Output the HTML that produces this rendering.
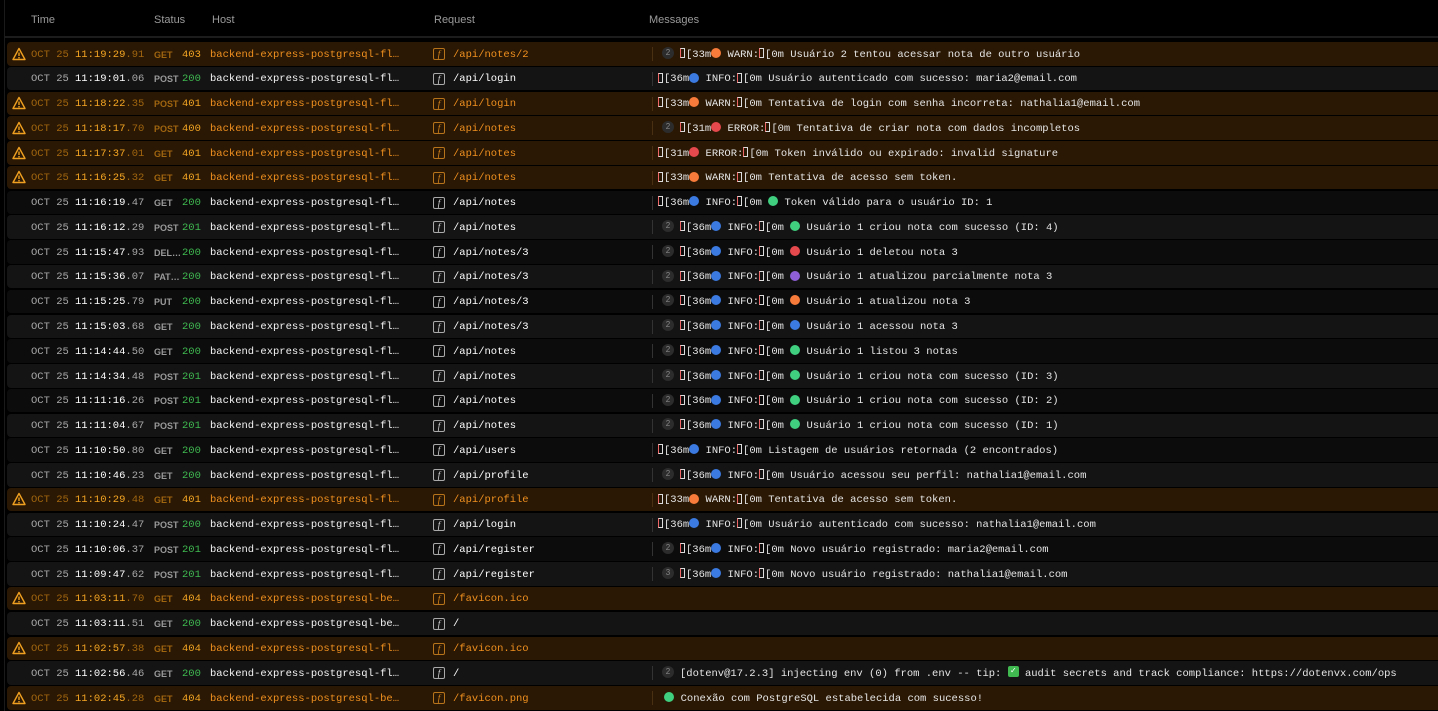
<!DOCTYPE html>
<html><head><meta charset="utf-8"><style>
*{margin:0;padding:0;box-sizing:border-box}
body{width:1438px;height:711px;background:#000;overflow:hidden;position:relative;font-family:"Liberation Mono","DejaVu Sans Mono",monospace;font-size:10.5px;color:#e6e6e6}
.h{position:absolute;top:14px;font-family:"Liberation Sans","DejaVu Sans",sans-serif;font-size:11px;color:#9a9a9a}
.hl{position:absolute;top:36px;left:4px;right:0;height:2px;background:#1c1c1c}
.lb{position:absolute;left:4px;top:0;bottom:0;width:1px;background:#1a1a1a}
.r{position:absolute;left:7px;right:0;height:23.5px;border-radius:4px 0 0 4px;background:#0c0c0c;line-height:23.5px;white-space:nowrap}
.r.l{background:#141414}
.r.w{background:#2a1804}
.r span{position:absolute;top:1.5px}
.d{left:24px;color:#a8a8a8}
.t{left:68px;color:#fff}
.t em{font-style:normal;color:#a8a8a8}
.m{left:147px;font-family:"Liberation Sans",sans-serif;font-size:9px;font-weight:bold;color:#9a9a9a}
.s{left:175px;color:#3fb950}
.ho{left:203px;color:#f4f4f4}
.ic{left:426px;top:6px!important;width:12px;height:12px;border:1px solid #aaa;border-radius:2px;line-height:10px;text-align:center;font-size:9px;font-style:italic;color:#ddd;font-family:"Liberation Serif",serif}
.p{left:446px;color:#fff}
.dv{left:645px;top:5px!important;width:1px;height:14px;background:#333}
.ms{left:651px;color:#e6e6e6}
.w .d,.w .m{color:#a0650f}
.w .t{color:#f5a623}.w .t em{color:#a0650f}
.w .s{color:#f5a623}
.w .ho,.w .p{color:#f0901f}
.w .ic{border-color:#b8741a;color:#e08a1c}
.w .dv{background:#4a3012}
.wi{left:5px;top:4.5px!important;width:14px;height:14px}
.b{display:inline-block;width:12px;height:12px;border-radius:6px;background:#2c2c2c;color:#888;font-size:8px;line-height:12px;text-align:center;font-style:normal;font-family:"Liberation Sans",sans-serif;vertical-align:middle;margin:-2px 6px 0 4px}
u{display:inline-block;width:5px;height:10px;border:1px solid #ddd;border-left-color:#e66;vertical-align:middle;margin:-2px 1px 0 0;text-decoration:none}
.c{display:inline-block;width:10px;height:10px;border-radius:5px;vertical-align:middle;margin-top:-2px}
.o{background:#f77b3a}.bl{background:#3b7ae0}.rd{background:#e5484d}.g{background:#3fcf7f}.pu{background:#8e5fd6}
.ck{display:inline-block;width:11px;height:11px;background:#3fb950;border-radius:2px;color:#fff;font-size:9px;line-height:11px;text-align:center;vertical-align:middle;margin-top:-2px;font-style:normal}
</style></head><body>
<div class="lb"></div>
<div class="h" style="left:31px">Time</div>
<div class="h" style="left:154px">Status</div>
<div class="h" style="left:212px">Host</div>
<div class="h" style="left:434px">Request</div>
<div class="h" style="left:649px">Messages</div>
<div class="hl"></div>

<svg width="0" height="0" style="position:absolute"><defs><symbol id="wr" viewBox="0 0 14 14"><path d="M7 1.5L13 12.5H1Z" fill="none" stroke="#f0a020" stroke-width="1.4" stroke-linejoin="round"/><path d="M7 5.5v3.5" stroke="#f0a020" stroke-width="1.4"/><circle cx="7" cy="10.7" r=".8" fill="#f0a020"/></symbol></defs></svg>

<div class="r w" style="top:42px"><svg class="wi" style="position:absolute"><use href="#wr"/></svg><span class="d">OCT 25</span><span class="t">11:19:29<em>.91</em></span><span class="m">GET</span><span class="s">403</span><span class="ho">backend-express-postgresql-fl…</span><span class="ic">f</span><span class="p">/api/notes/2</span><span class="dv"></span><span class="ms"><i class="b">2</i><u></u>[33m<i class="c o"></i> WARN:<u></u>[0m Usuário 2 tentou acessar nota de outro usuário</span></div>
<div class="r l" style="top:66.8px"><span class="d">OCT 25</span><span class="t">11:19:01<em>.06</em></span><span class="m">POST</span><span class="s">200</span><span class="ho">backend-express-postgresql-fl…</span><span class="ic">f</span><span class="p">/api/login</span><span class="dv"></span><span class="ms"><u></u>[36m<i class="c bl"></i> INFO:<u></u>[0m Usuário autenticado com sucesso: maria2@email.com</span></div>
<div class="r w" style="top:91.5px"><svg class="wi" style="position:absolute"><use href="#wr"/></svg><span class="d">OCT 25</span><span class="t">11:18:22<em>.35</em></span><span class="m">POST</span><span class="s">401</span><span class="ho">backend-express-postgresql-fl…</span><span class="ic">f</span><span class="p">/api/login</span><span class="dv"></span><span class="ms"><u></u>[33m<i class="c o"></i> WARN:<u></u>[0m Tentativa de login com senha incorreta: nathalia1@email.com</span></div>
<div class="r w" style="top:116.3px"><svg class="wi" style="position:absolute"><use href="#wr"/></svg><span class="d">OCT 25</span><span class="t">11:18:17<em>.70</em></span><span class="m">POST</span><span class="s">400</span><span class="ho">backend-express-postgresql-fl…</span><span class="ic">f</span><span class="p">/api/notes</span><span class="dv"></span><span class="ms"><i class="b">2</i><u></u>[31m<i class="c rd"></i> ERROR:<u></u>[0m Tentativa de criar nota com dados incompletos</span></div>
<div class="r w" style="top:141.1px"><svg class="wi" style="position:absolute"><use href="#wr"/></svg><span class="d">OCT 25</span><span class="t">11:17:37<em>.01</em></span><span class="m">GET</span><span class="s">401</span><span class="ho">backend-express-postgresql-fl…</span><span class="ic">f</span><span class="p">/api/notes</span><span class="dv"></span><span class="ms"><u></u>[31m<i class="c rd"></i> ERROR:<u></u>[0m Token inválido ou expirado: invalid signature</span></div>
<div class="r w" style="top:165.8px"><svg class="wi" style="position:absolute"><use href="#wr"/></svg><span class="d">OCT 25</span><span class="t">11:16:25<em>.32</em></span><span class="m">GET</span><span class="s">401</span><span class="ho">backend-express-postgresql-fl…</span><span class="ic">f</span><span class="p">/api/notes</span><span class="dv"></span><span class="ms"><u></u>[33m<i class="c o"></i> WARN:<u></u>[0m Tentativa de acesso sem token.</span></div>
<div class="r" style="top:190.6px"><span class="d">OCT 25</span><span class="t">11:16:19<em>.47</em></span><span class="m">GET</span><span class="s">200</span><span class="ho">backend-express-postgresql-fl…</span><span class="ic">f</span><span class="p">/api/notes</span><span class="dv"></span><span class="ms"><u></u>[36m<i class="c bl"></i> INFO:<u></u>[0m <i class="c g"></i> Token válido para o usuário ID: 1</span></div>
<div class="r l" style="top:215.4px"><span class="d">OCT 25</span><span class="t">11:16:12<em>.29</em></span><span class="m">POST</span><span class="s">201</span><span class="ho">backend-express-postgresql-fl…</span><span class="ic">f</span><span class="p">/api/notes</span><span class="dv"></span><span class="ms"><i class="b">2</i><u></u>[36m<i class="c bl"></i> INFO:<u></u>[0m <i class="c g"></i> Usuário 1 criou nota com sucesso (ID: 4)</span></div>
<div class="r" style="top:240.2px"><span class="d">OCT 25</span><span class="t">11:15:47<em>.93</em></span><span class="m">DEL…</span><span class="s">200</span><span class="ho">backend-express-postgresql-fl…</span><span class="ic">f</span><span class="p">/api/notes/3</span><span class="dv"></span><span class="ms"><i class="b">2</i><u></u>[36m<i class="c bl"></i> INFO:<u></u>[0m <i class="c rd"></i> Usuário 1 deletou nota 3</span></div>
<div class="r l" style="top:264.9px"><span class="d">OCT 25</span><span class="t">11:15:36<em>.07</em></span><span class="m">PAT…</span><span class="s">200</span><span class="ho">backend-express-postgresql-fl…</span><span class="ic">f</span><span class="p">/api/notes/3</span><span class="dv"></span><span class="ms"><i class="b">2</i><u></u>[36m<i class="c bl"></i> INFO:<u></u>[0m <i class="c pu"></i> Usuário 1 atualizou parcialmente nota 3</span></div>
<div class="r" style="top:289.7px"><span class="d">OCT 25</span><span class="t">11:15:25<em>.79</em></span><span class="m">PUT</span><span class="s">200</span><span class="ho">backend-express-postgresql-fl…</span><span class="ic">f</span><span class="p">/api/notes/3</span><span class="dv"></span><span class="ms"><i class="b">2</i><u></u>[36m<i class="c bl"></i> INFO:<u></u>[0m <i class="c o"></i> Usuário 1 atualizou nota 3</span></div>
<div class="r l" style="top:314.5px"><span class="d">OCT 25</span><span class="t">11:15:03<em>.68</em></span><span class="m">GET</span><span class="s">200</span><span class="ho">backend-express-postgresql-fl…</span><span class="ic">f</span><span class="p">/api/notes/3</span><span class="dv"></span><span class="ms"><i class="b">2</i><u></u>[36m<i class="c bl"></i> INFO:<u></u>[0m <i class="c bl"></i> Usuário 1 acessou nota 3</span></div>
<div class="r" style="top:339.2px"><span class="d">OCT 25</span><span class="t">11:14:44<em>.50</em></span><span class="m">GET</span><span class="s">200</span><span class="ho">backend-express-postgresql-fl…</span><span class="ic">f</span><span class="p">/api/notes</span><span class="dv"></span><span class="ms"><i class="b">2</i><u></u>[36m<i class="c bl"></i> INFO:<u></u>[0m <i class="c g"></i> Usuário 1 listou 3 notas</span></div>
<div class="r l" style="top:364px"><span class="d">OCT 25</span><span class="t">11:14:34<em>.48</em></span><span class="m">POST</span><span class="s">201</span><span class="ho">backend-express-postgresql-fl…</span><span class="ic">f</span><span class="p">/api/notes</span><span class="dv"></span><span class="ms"><i class="b">2</i><u></u>[36m<i class="c bl"></i> INFO:<u></u>[0m <i class="c g"></i> Usuário 1 criou nota com sucesso (ID: 3)</span></div>
<div class="r" style="top:388.8px"><span class="d">OCT 25</span><span class="t">11:11:16<em>.26</em></span><span class="m">POST</span><span class="s">201</span><span class="ho">backend-express-postgresql-fl…</span><span class="ic">f</span><span class="p">/api/notes</span><span class="dv"></span><span class="ms"><i class="b">2</i><u></u>[36m<i class="c bl"></i> INFO:<u></u>[0m <i class="c g"></i> Usuário 1 criou nota com sucesso (ID: 2)</span></div>
<div class="r l" style="top:413.6px"><span class="d">OCT 25</span><span class="t">11:11:04<em>.67</em></span><span class="m">POST</span><span class="s">201</span><span class="ho">backend-express-postgresql-fl…</span><span class="ic">f</span><span class="p">/api/notes</span><span class="dv"></span><span class="ms"><i class="b">2</i><u></u>[36m<i class="c bl"></i> INFO:<u></u>[0m <i class="c g"></i> Usuário 1 criou nota com sucesso (ID: 1)</span></div>
<div class="r" style="top:438.3px"><span class="d">OCT 25</span><span class="t">11:10:50<em>.80</em></span><span class="m">GET</span><span class="s">200</span><span class="ho">backend-express-postgresql-fl…</span><span class="ic">f</span><span class="p">/api/users</span><span class="dv"></span><span class="ms"><u></u>[36m<i class="c bl"></i> INFO:<u></u>[0m Listagem de usuários retornada (2 encontrados)</span></div>
<div class="r l" style="top:463.1px"><span class="d">OCT 25</span><span class="t">11:10:46<em>.23</em></span><span class="m">GET</span><span class="s">200</span><span class="ho">backend-express-postgresql-fl…</span><span class="ic">f</span><span class="p">/api/profile</span><span class="dv"></span><span class="ms"><i class="b">2</i><u></u>[36m<i class="c bl"></i> INFO:<u></u>[0m Usuário acessou seu perfil: nathalia1@email.com</span></div>
<div class="r w" style="top:487.9px"><svg class="wi" style="position:absolute"><use href="#wr"/></svg><span class="d">OCT 25</span><span class="t">11:10:29<em>.48</em></span><span class="m">GET</span><span class="s">401</span><span class="ho">backend-express-postgresql-fl…</span><span class="ic">f</span><span class="p">/api/profile</span><span class="dv"></span><span class="ms"><u></u>[33m<i class="c o"></i> WARN:<u></u>[0m Tentativa de acesso sem token.</span></div>
<div class="r l" style="top:512.6px"><span class="d">OCT 25</span><span class="t">11:10:24<em>.47</em></span><span class="m">POST</span><span class="s">200</span><span class="ho">backend-express-postgresql-fl…</span><span class="ic">f</span><span class="p">/api/login</span><span class="dv"></span><span class="ms"><u></u>[36m<i class="c bl"></i> INFO:<u></u>[0m Usuário autenticado com sucesso: nathalia1@email.com</span></div>
<div class="r" style="top:537.4px"><span class="d">OCT 25</span><span class="t">11:10:06<em>.37</em></span><span class="m">POST</span><span class="s">201</span><span class="ho">backend-express-postgresql-fl…</span><span class="ic">f</span><span class="p">/api/register</span><span class="dv"></span><span class="ms"><i class="b">2</i><u></u>[36m<i class="c bl"></i> INFO:<u></u>[0m Novo usuário registrado: maria2@email.com</span></div>
<div class="r l" style="top:562.2px"><span class="d">OCT 25</span><span class="t">11:09:47<em>.62</em></span><span class="m">POST</span><span class="s">201</span><span class="ho">backend-express-postgresql-fl…</span><span class="ic">f</span><span class="p">/api/register</span><span class="dv"></span><span class="ms"><i class="b">3</i><u></u>[36m<i class="c bl"></i> INFO:<u></u>[0m Novo usuário registrado: nathalia1@email.com</span></div>
<div class="r w" style="top:586.9px"><svg class="wi" style="position:absolute"><use href="#wr"/></svg><span class="d">OCT 25</span><span class="t">11:03:11<em>.70</em></span><span class="m">GET</span><span class="s">404</span><span class="ho">backend-express-postgresql-be…</span><span class="ic">f</span><span class="p">/favicon.ico</span></div>
<div class="r l" style="top:611.7px"><span class="d">OCT 25</span><span class="t">11:03:11<em>.51</em></span><span class="m">GET</span><span class="s">200</span><span class="ho">backend-express-postgresql-be…</span><span class="ic">f</span><span class="p">/</span></div>
<div class="r w" style="top:636.5px"><svg class="wi" style="position:absolute"><use href="#wr"/></svg><span class="d">OCT 25</span><span class="t">11:02:57<em>.38</em></span><span class="m">GET</span><span class="s">404</span><span class="ho">backend-express-postgresql-fl…</span><span class="ic">f</span><span class="p">/favicon.ico</span></div>
<div class="r l" style="top:661.2px"><span class="d">OCT 25</span><span class="t">11:02:56<em>.46</em></span><span class="m">GET</span><span class="s">200</span><span class="ho">backend-express-postgresql-fl…</span><span class="ic">f</span><span class="p">/</span><span class="dv"></span><span class="ms"><i class="b">2</i>[dotenv@17.2.3] injecting env (0) from .env -- tip: <i class="ck">✓</i> audit secrets and track compliance: https://dotenvx.com/ops</span></div>
<div class="r w" style="top:686px"><svg class="wi" style="position:absolute"><use href="#wr"/></svg><span class="d">OCT 25</span><span class="t">11:02:45<em>.28</em></span><span class="m">GET</span><span class="s">404</span><span class="ho">backend-express-postgresql-be…</span><span class="ic">f</span><span class="p">/favicon.png</span><span class="dv"></span><span class="ms">&nbsp;<i class="c g"></i> Conexão com PostgreSQL estabelecida com sucesso!</span></div>
</body></html>
